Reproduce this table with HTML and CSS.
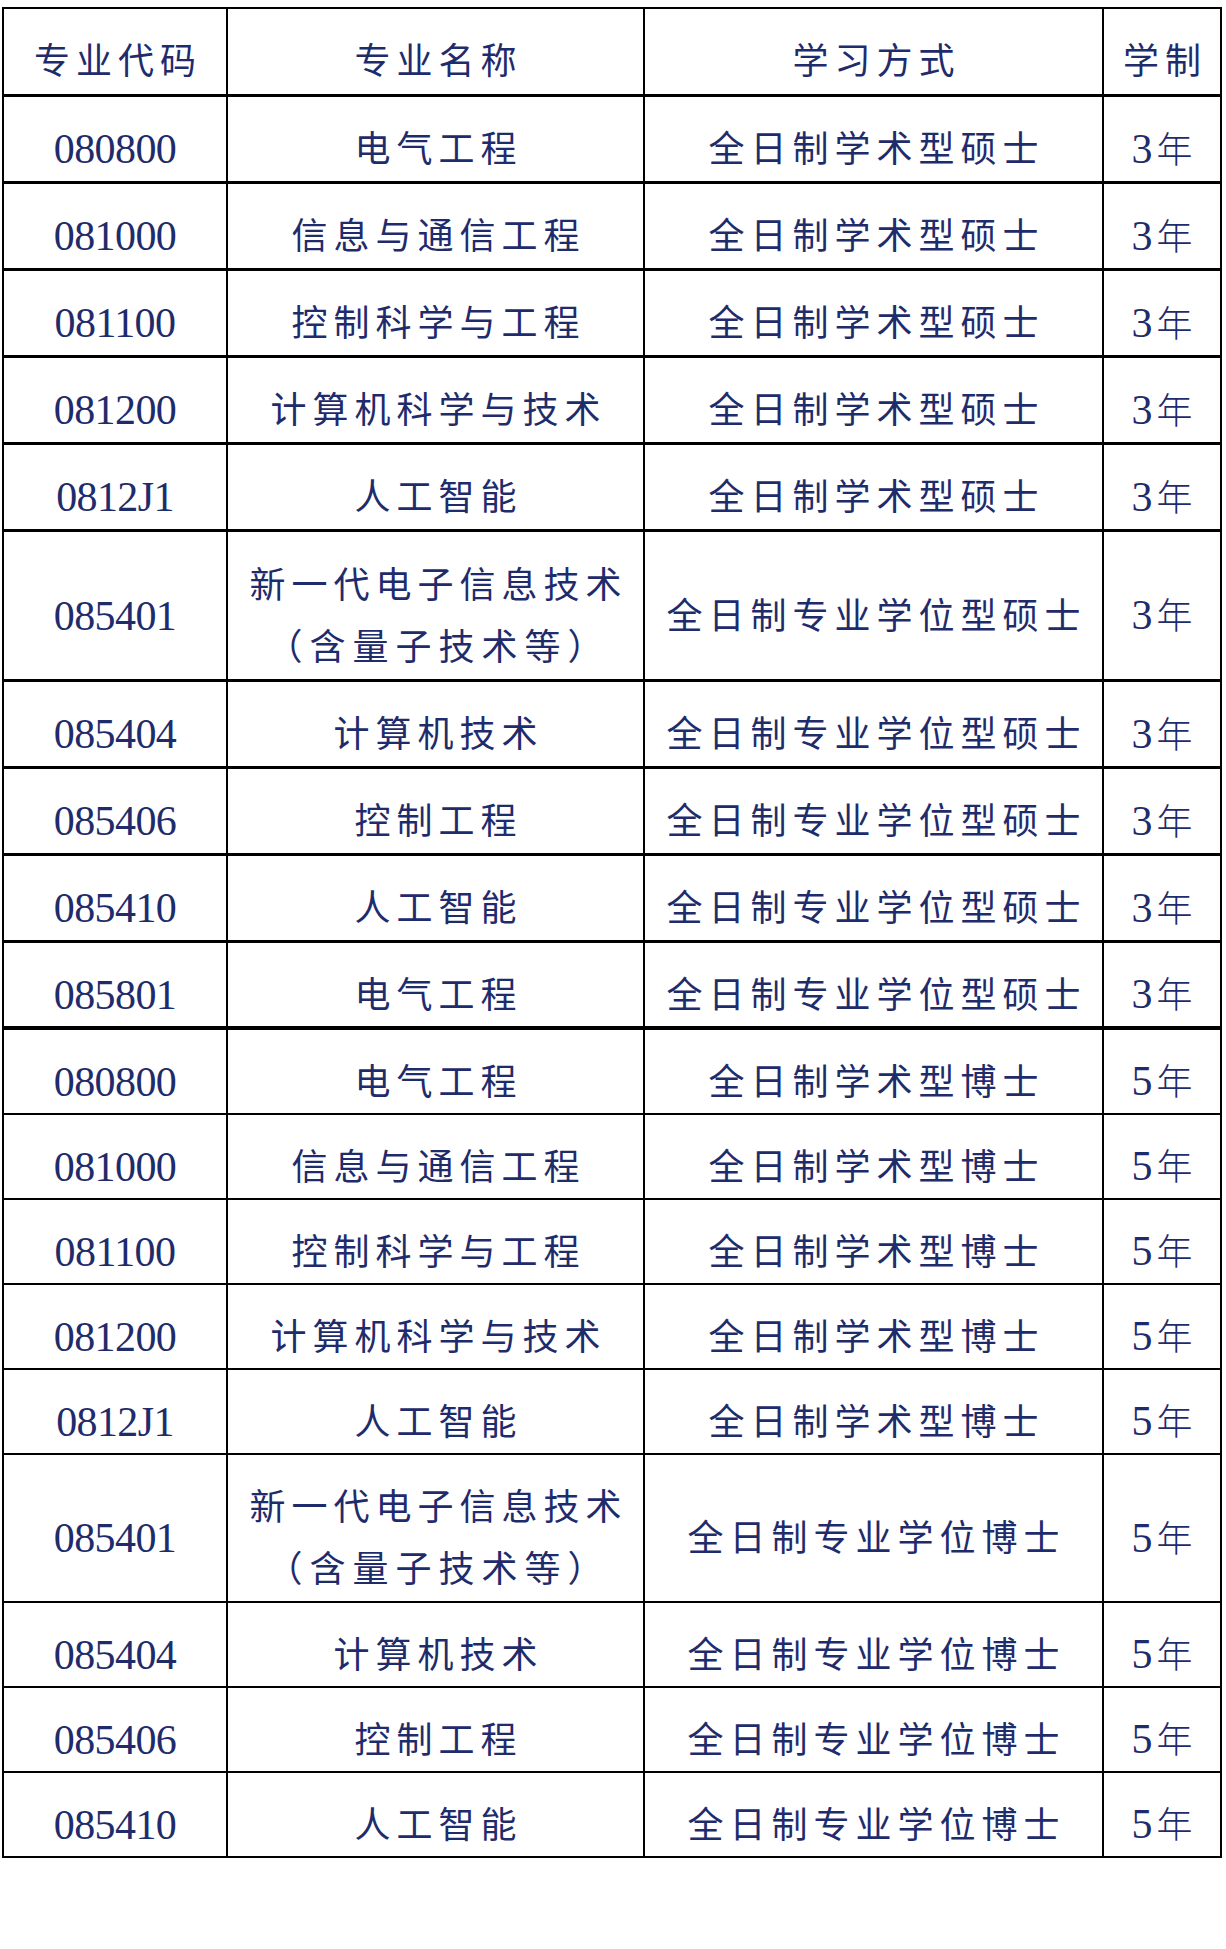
FILE: index.html
```html
<!DOCTYPE html>
<html lang="zh-CN">
<head>
<meta charset="utf-8">
<title>专业列表</title>
<link rel="stylesheet" href="styles.css">
</head>
<body>
<table class="majors">
  <thead>
    <tr class="head">
      <th class="c1 cjk">专业代码</th>
      <th class="c2 cjk">专业名称</th>
      <th class="c3 cjk">学习方式</th>
      <th class="c4 cjk">学制</th>
    </tr>
  </thead>
  <tbody>
    <tr class="m"><td class="code">080800</td><td class="cjk">电气工程</td><td class="cjk">全日制学术型硕士</td><td class="yr"><span class="num">3</span>年</td></tr>
    <tr class="m"><td class="code">081000</td><td class="cjk">信息与通信工程</td><td class="cjk">全日制学术型硕士</td><td class="yr"><span class="num">3</span>年</td></tr>
    <tr class="m"><td class="code">081100</td><td class="cjk">控制科学与工程</td><td class="cjk">全日制学术型硕士</td><td class="yr"><span class="num">3</span>年</td></tr>
    <tr class="m"><td class="code">081200</td><td class="cjk">计算机科学与技术</td><td class="cjk">全日制学术型硕士</td><td class="yr"><span class="num">3</span>年</td></tr>
    <tr class="m"><td class="code">0812J1</td><td class="cjk">人工智能</td><td class="cjk">全日制学术型硕士</td><td class="yr"><span class="num">3</span>年</td></tr>
    <tr class="m dbl"><td class="code">085401</td><td class="cjk two">新一代电子信息技术<br><span class="paren">（含量子技术等）</span></td><td class="cjk">全日制专业学位型硕士</td><td class="yr"><span class="num">3</span>年</td></tr>
    <tr class="m"><td class="code">085404</td><td class="cjk">计算机技术</td><td class="cjk">全日制专业学位型硕士</td><td class="yr"><span class="num">3</span>年</td></tr>
    <tr class="m"><td class="code">085406</td><td class="cjk">控制工程</td><td class="cjk">全日制专业学位型硕士</td><td class="yr"><span class="num">3</span>年</td></tr>
    <tr class="m"><td class="code">085410</td><td class="cjk">人工智能</td><td class="cjk">全日制专业学位型硕士</td><td class="yr"><span class="num">3</span>年</td></tr>
    <tr class="m last"><td class="code">085801</td><td class="cjk">电气工程</td><td class="cjk">全日制专业学位型硕士</td><td class="yr"><span class="num">3</span>年</td></tr>
    <tr class="d"><td class="code">080800</td><td class="cjk">电气工程</td><td class="cjk">全日制学术型博士</td><td class="yr"><span class="num">5</span>年</td></tr>
    <tr class="d"><td class="code">081000</td><td class="cjk">信息与通信工程</td><td class="cjk">全日制学术型博士</td><td class="yr"><span class="num">5</span>年</td></tr>
    <tr class="d"><td class="code">081100</td><td class="cjk">控制科学与工程</td><td class="cjk">全日制学术型博士</td><td class="yr"><span class="num">5</span>年</td></tr>
    <tr class="d"><td class="code">081200</td><td class="cjk">计算机科学与技术</td><td class="cjk">全日制学术型博士</td><td class="yr"><span class="num">5</span>年</td></tr>
    <tr class="d"><td class="code">0812J1</td><td class="cjk">人工智能</td><td class="cjk">全日制学术型博士</td><td class="yr"><span class="num">5</span>年</td></tr>
    <tr class="d dbl"><td class="code">085401</td><td class="cjk two">新一代电子信息技术<br><span class="paren">（含量子技术等）</span></td><td class="cjk">全日制专业学位博士</td><td class="yr"><span class="num">5</span>年</td></tr>
    <tr class="d"><td class="code">085404</td><td class="cjk">计算机技术</td><td class="cjk">全日制专业学位博士</td><td class="yr"><span class="num">5</span>年</td></tr>
    <tr class="d"><td class="code">085406</td><td class="cjk">控制工程</td><td class="cjk">全日制专业学位博士</td><td class="yr"><span class="num">5</span>年</td></tr>
    <tr class="d"><td class="code">085410</td><td class="cjk">人工智能</td><td class="cjk">全日制专业学位博士</td><td class="yr"><span class="num">5</span>年</td></tr>
  </tbody>
</table>
</body>
</html>
```

FILE: styles.css
```css
html, body {
  margin: 0;
  padding: 0;
  background: #ffffff;
}

.majors {
  margin: 7px 0 0 2px;
  width: 1220px;
  table-layout: fixed;
  border-collapse: separate;
  border-spacing: 0;
  border-top: 2px solid #000;
  border-left: 2px solid #000;
  color: #1f2c6c;
}

.majors th,
.majors td {
  box-sizing: border-box;
  border-right: 2px solid #000;
  border-bottom: 3px solid #000;
  text-align: center;
  vertical-align: middle;
  padding: 0;
  font-weight: normal;
  line-height: 48px;
  white-space: nowrap;
}

.c1 { width: 224px; }
.c2 { width: 417px; }
.c3 { width: 459px; }
.c4 { width: 118px; }

.head { height: 88px; }
.m { height: 87px; }
.m.dbl { height: 150px; }
.m.last td { border-bottom-width: 4px; }
.d { height: 85px; }
.d td { border-bottom-width: 2px; }
.d.dbl { height: 148px; }

.cjk {
  font-family: "Noto Sans CJK SC", sans-serif;
  font-weight: 300;
  font-size: 36px;
  letter-spacing: 6px;
}

.majors .cjk {
  padding: 14px 0 0 6px;
}

.majors .head .cjk {
  padding-top: 13px;
}

.majors .two {
  line-height: 62px;
}

.paren {
  letter-spacing: 7px;
}

.majors .code {
  font-family: "Liberation Serif", serif;
  font-size: 42px;
  letter-spacing: -0.6px;
  padding: 20px 0 0 0;
}

.majors .yr {
  font-family: "Noto Sans CJK SC", sans-serif;
  font-weight: 300;
  font-size: 36px;
  padding: 17px 0 0 0;
}

.num {
  font-family: "Liberation Serif", serif;
  font-size: 42px;
  margin-right: 4px;
}
```
